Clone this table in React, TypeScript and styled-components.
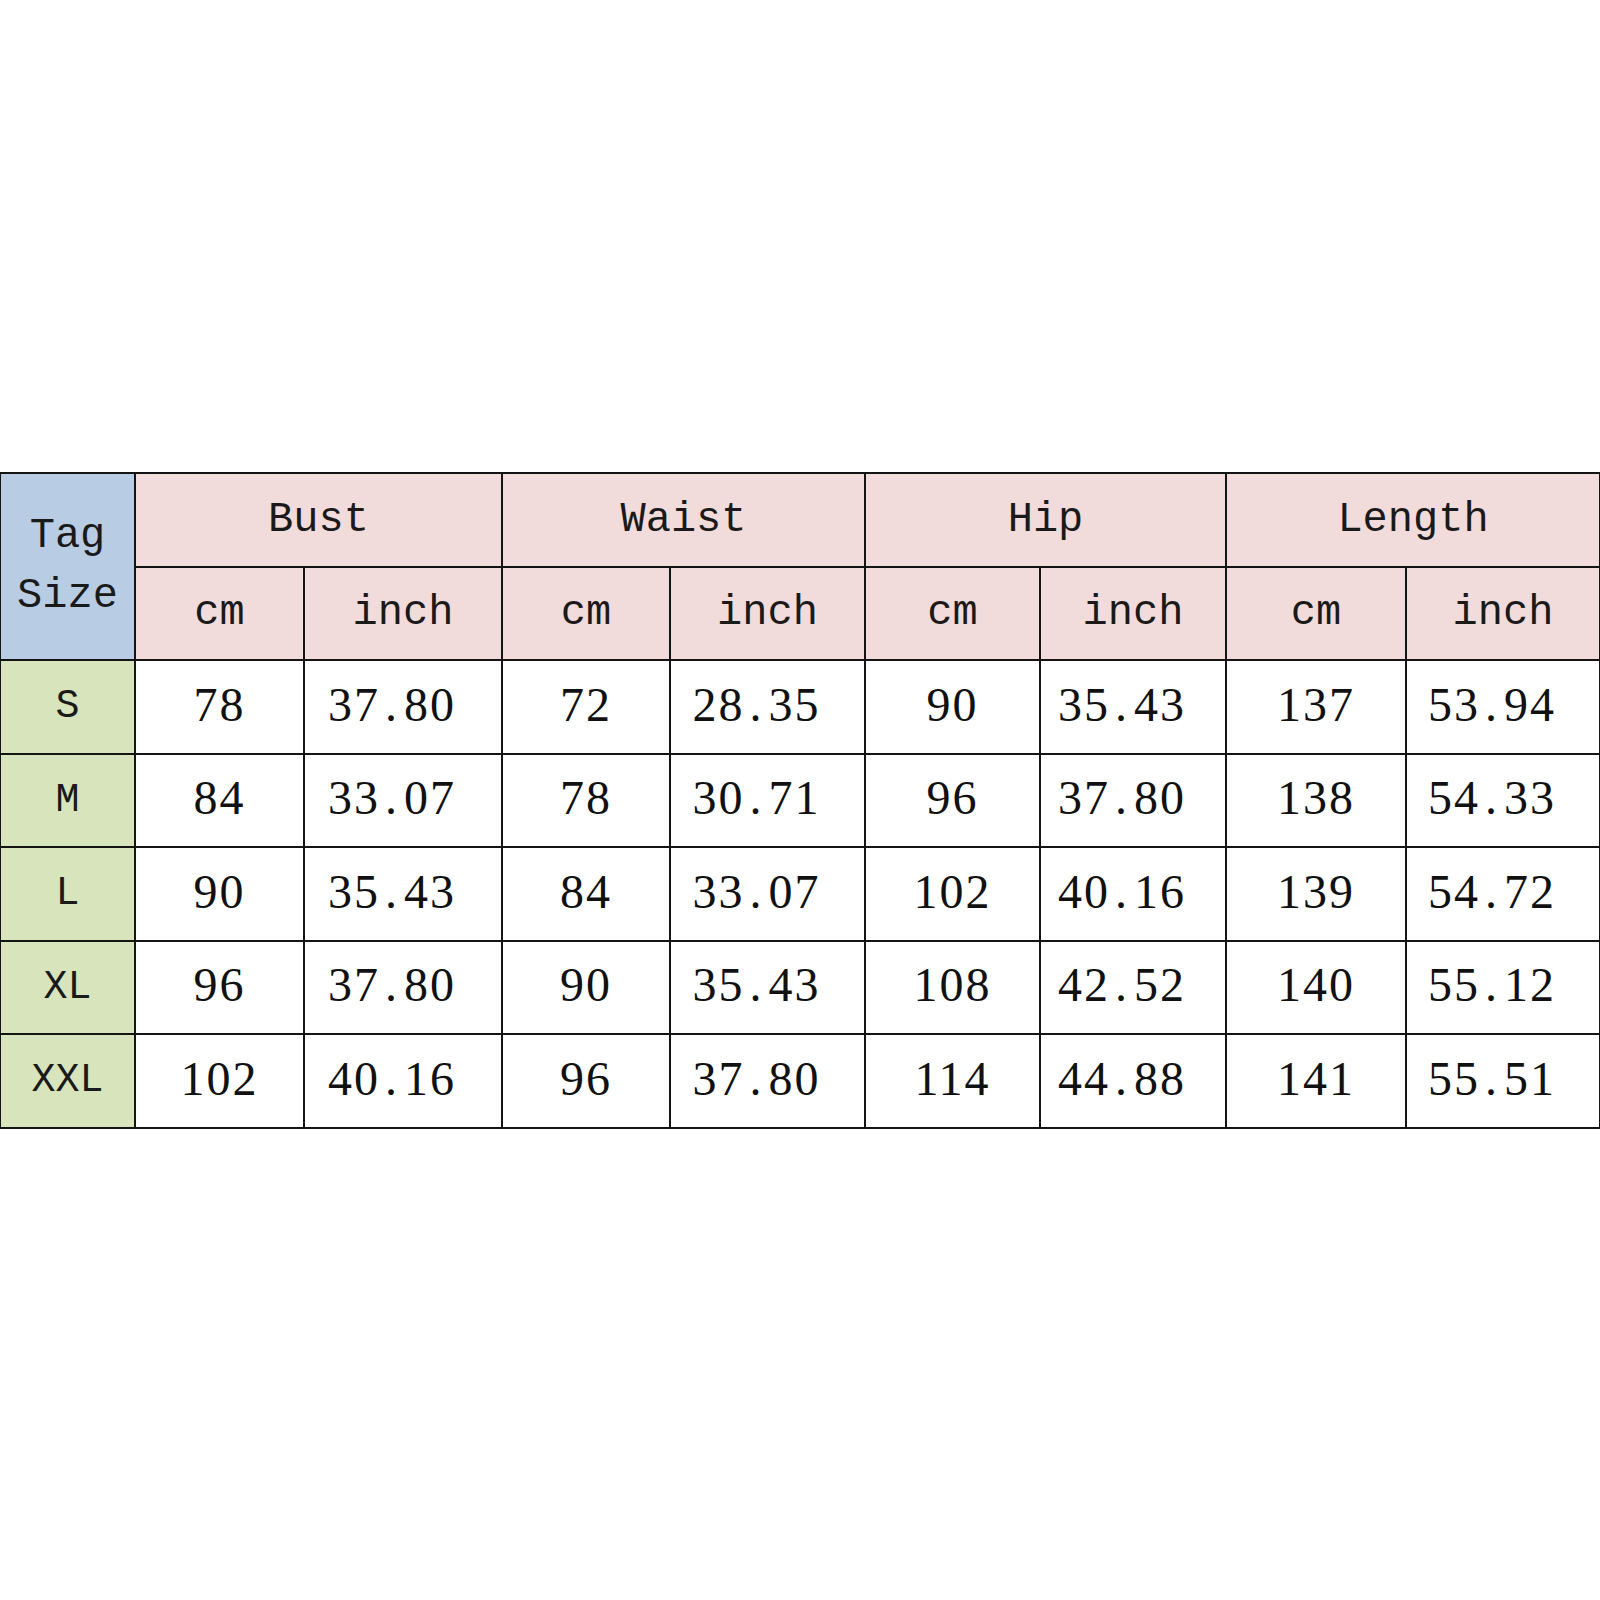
import React from "react"
import styled, { createGlobalStyle } from "styled-components"

const GlobalStyle = createGlobalStyle`
    html, body {
        margin: 0;
        padding: 0;
        background: #ffffff;
    }
`

const colors = {
    line: '#141414',
    tag: '#b8cce4',
    head: '#f2dcdb',
    size: '#d8e4bc',
    text: '#1a1a1a',
}

const Page = styled.div`
    width: 1600px;
    height: 1600px;
    display: flex;
    align-items: center;
    justify-content: center;
`

const Chart = styled.table`
    width: 1600px;
    border-collapse: collapse;
    table-layout: fixed;
    border: 2px solid ${colors.line};
`

const Row = styled.tr<{ $h: number }>`
    height: ${p => p.$h}px;
`

const HeadCell = styled.th<{ $tone: 'tag' | 'head' }>`
    background-color: ${p => colors[p.$tone]};
    border: 2px solid ${colors.line};
    color: ${colors.text};
    font-family: "Liberation Mono", "Courier New", monospace;
    font-size: 42px;
    font-weight: 400;
    line-height: 60px;
    padding: 0;
    text-align: center;
    vertical-align: middle;
`

const SizeCell = styled.td`
    background-color: ${colors.size};
    border: 2px solid ${colors.line};
    color: ${colors.text};
    font-family: "Liberation Mono", "Courier New", monospace;
    font-size: 40px;
    padding: 0;
    text-align: center;
    vertical-align: middle;
`

const ValueCell = styled.td<{ $inch?: boolean }>`
    background-color: #ffffff;
    border: 2px solid ${colors.line};
    color: #111111;
    font-family: "Liberation Serif", "Times New Roman", serif;
    font-size: 48px;
    letter-spacing: 2px;
    padding: 0 ${p => (p.$inch ? '22px' : '0')} 5px 0;
    text-align: center;
    vertical-align: middle;
`

const Dot = styled.span`
    display: inline-block;
    width: 0.5em;
    text-align: center;
`

const widths = [135, 169, 198, 168, 195, 175, 186, 180, 194]
const groups = ['Bust', 'Waist', 'Hip', 'Length']

const rows: string[][] = [
    ['S', '78', '37.80', '72', '28.35', '90', '35.43', '137', '53.94'],
    ['M', '84', '33.07', '78', '30.71', '96', '37.80', '138', '54.33'],
    ['L', '90', '35.43', '84', '33.07', '102', '40.16', '139', '54.72'],
    ['XL', '96', '37.80', '90', '35.43', '108', '42.52', '140', '55.12'],
    ['XXL', '102', '40.16', '96', '37.80', '114', '44.88', '141', '55.51'],
]
const rowHeights = [94, 93, 94, 93, 94]

const Num: React.FC<{ value: string }> = ({ value }) => {
    const [whole, frac] = value.split('.')
    if (frac === undefined) return <>{whole}</>
    return <>{whole}<Dot>.</Dot>{frac}</>
}

export default function App() {
    return (
        <Page>
            <GlobalStyle />
            <Chart>
                <colgroup>
                    {widths.map((w, i) => <col key={i} style={{ width: w }} />)}
                </colgroup>
                <thead>
                    <Row $h={94}>
                        <HeadCell $tone="tag" rowSpan={2}>Tag<br />Size</HeadCell>
                        {groups.map(g => <HeadCell key={g} $tone="head" colSpan={2}>{g}</HeadCell>)}
                    </Row>
                    <Row $h={93}>
                        {groups.map(g => (
                            <React.Fragment key={g}>
                                <HeadCell $tone="head">cm</HeadCell>
                                <HeadCell $tone="head">inch</HeadCell>
                            </React.Fragment>
                        ))}
                    </Row>
                </thead>
                <tbody>
                    {rows.map((r, i) => (
                        <Row key={r[0]} $h={rowHeights[i]}>
                            <SizeCell>{r[0]}</SizeCell>
                            {r.slice(1).map((v, j) => (
                                <ValueCell key={j} $inch={j % 2 === 1}><Num value={v} /></ValueCell>
                            ))}
                        </Row>
                    ))}
                </tbody>
            </Chart>
        </Page>
    )
}
